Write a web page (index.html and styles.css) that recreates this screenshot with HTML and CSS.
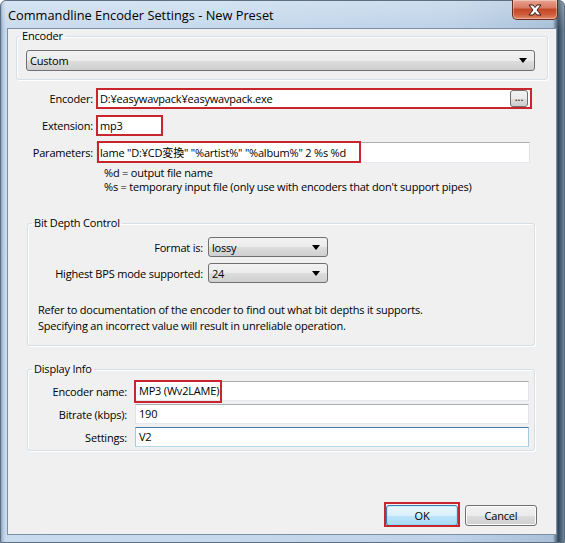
FILE: index.html
```html
<!DOCTYPE html>
<html>
<head>
<meta charset="utf-8">
<link rel="stylesheet" href="styles.css">
</head>
<body>
<div class="window">
  <div class="titlebar">
    <span class="title">Commandline Encoder Settings - New Preset</span>
    <span class="close">
      <svg width="16" height="12" viewBox="0 0 16 12"><path d="M2 1 L6 1 L8 3.5 L10 1 L14 1 L10 6 L14 11 L10 11 L8 8.5 L6 11 L2 11 L6 6 Z" fill="#fff" stroke="#3a1a14" stroke-width="1" stroke-linejoin="round"/></svg>
    </span>
  </div>
  <div class="client">
    <fieldset class="group g-encoder">
      <legend>Encoder</legend>
      <div class="select sel-wide"><span>Custom</span><svg class="arrow" width="8" height="5" viewBox="0 0 8 5"><path d="M0 0 H8 L4 5 Z" fill="#000"/></svg></div>
    </fieldset>

    <div class="form">
      <label>Encoder:</label>
      <div class="input hl in-enc"><span>D:¥easywavpack¥easywavpack.exe</span><span class="dots">...</span></div>
      <label>Extension:</label>
      <div class="input hl in-ext">mp3</div>
      <label>Parameters:</label>
      <div class="input in-par">lame "D:¥CD変換" "%artist%" "%album%" 2 %s %d<span class="mark mark-par"></span></div>
    </div>
    <div class="notes">
      <div>%d = output file name</div>
      <div>%s = temporary input file (only use with encoders that don't support pipes)</div>
    </div>

    <fieldset class="group g-bits">
      <legend>Bit Depth Control</legend>
      <div class="bits-grid">
        <label>Format is:</label>
        <div class="select sel-small"><span>lossy</span><svg class="arrow" width="8" height="5" viewBox="0 0 8 5"><path d="M0 0 H8 L4 5 Z" fill="#000"/></svg></div>
        <label>Highest BPS mode supported:</label>
        <div class="select sel-small"><span>24</span><svg class="arrow" width="8" height="5" viewBox="0 0 8 5"><path d="M0 0 H8 L4 5 Z" fill="#000"/></svg></div>
      </div>
      <p class="info">Refer to documentation of the encoder to find out what bit depths it supports.<br>Specifying an incorrect value will result in unreliable operation.</p>
    </fieldset>

    <fieldset class="group g-display">
      <legend>Display Info</legend>
      <div class="disp-grid">
        <label>Encoder name:</label>
        <div class="input in-disp">MP3 (Wv2LAME)<span class="mark mark-name"></span></div>
        <label>Bitrate (kbps):</label>
        <div class="input in-disp">190</div>
        <label>Settings:</label>
        <div class="input in-disp focus">V2</div>
      </div>
    </fieldset>

    <div class="buttons">
      <div class="btn default">OK<span class="mark mark-ok"></span></div>
      <div class="btn">Cancel</div>
    </div>
  </div>
</div>
</body>
</html>
```

FILE: styles.css
```css
* { box-sizing: border-box; }
html, body { margin: 0; padding: 0; }
body {
  width: 565px;
  height: 543px;
  overflow: hidden;
  background: #ffffff;
  font-family: "Open Sans", "Noto Sans CJK JP", sans-serif;
  font-size: 11px;
  letter-spacing: -0.2px;
  color: #000;
}
.window {
  width: 565px;
  height: 543px;
  border: 1px solid #5d6f82;
  border-radius: 6px 6px 0 0;
  background:
    linear-gradient(180deg, rgba(255,255,255,0.25) 0, rgba(255,255,255,0) 28px),
    linear-gradient(90deg, #8aa1b8 0, #b3c9e0 2px, #c9dbee 5px, #c6d9ed 40%, #bdd2e8 80%, #a9c0d8 98%, #33475b 99%, #6d8399 100%);
  padding: 0 7px 7px 6px;
  display: flex;
  flex-direction: column;
}
.titlebar {
  height: 27px;
  display: flex;
  align-items: flex-start;
  padding-left: 1px;
}
.title {
  font-size: 12.8px;
  letter-spacing: 0;
  line-height: 27px;
  color: #000;
  padding-top: 1px;
}
.close {
  margin-left: auto;
  margin-top: -1px;
  margin-right: -1px;
  width: 46px;
  height: 20px;
  border: 1px solid #6a2a1f;
  border-top: none;
  border-radius: 0 0 5px 5px;
  background: linear-gradient(180deg, #e8a392 0, #d97a63 40%, #c44729 50%, #cf5a38 75%, #e08a6a 100%);
  box-shadow: inset 0 0 0 1px rgba(255,255,255,0.35);
  display: flex;
  align-items: center;
  justify-content: center;
}
.client {
  width: 550px;
  height: 507px;
  background: #f0f0f0;
  border: 1px solid #7b8ea3;
  display: flex;
  flex-direction: column;
  align-items: flex-start;
}
.group {
  border: 1px solid #d5dfe5;
  border-radius: 3px;
  box-shadow: inset 1px 1px 0 #fff, 1px 1px 0 #fff;
  margin: 0;
  min-width: 0;
}
.group legend {
  padding: 0 2px;
  line-height: 14px;
  margin-left: -6px;
}
.g-encoder {
  margin-left: 8px;
  width: 532px;
  padding: 7px 12px 8px 9px;
}
.select {
  height: 21px;
  border: 1px solid #707070;
  border-radius: 3px;
  background: linear-gradient(180deg, #f2f2f2 0, #ebebeb 50%, #dddddd 51%, #cfcfcf 100%);
  display: flex;
  align-items: center;
  padding: 0 7px 0 3px;
  line-height: 19px;
}
.select .arrow { margin-left: auto; }
.sel-wide { width: 100%; }
.sel-small { width: 120px; height: 20px; }

.form {
  margin-top: 8px;
  display: grid;
  grid-template-columns: 85px auto;
  column-gap: 3px;
  row-gap: 6px;
  align-items: center;
  justify-items: start;
}
.form label, .bits-grid label, .disp-grid label { justify-self: end; white-space: nowrap; }
.input {
  position: relative;
  height: 21px;
  background: #fff;
  border: 1px solid;
  border-color: #abadb3 #e2e3ea #e3e9ef #e2e3ea;
  padding: 0 3px;
  line-height: 19px;
  white-space: nowrap;
  display: flex;
  align-items: center;
}
.input.hl {
  border: 2px solid #c8262c;
  padding: 0 2px;
  line-height: 17px;
}
.in-enc { width: 436px; }
.in-ext { width: 67px; }
.in-par { width: 434px; }
.dots {
  margin-left: auto;
  width: 18px;
  height: 17px;
  border: 1px solid #707070;
  border-radius: 3px;
  background: linear-gradient(180deg, #f2f2f2 0, #ebebeb 50%, #dddddd 51%, #cfcfcf 100%);
  font-size: 11px;
  letter-spacing: 0;
  line-height: 12px;
  text-align: center;
}
.mark {
  position: absolute;
  border: 2px solid #c8262c;
  pointer-events: none;
}
.mark-par { left: 0; top: -2px; width: 264px; height: 22px; }
.mark-name { left: -2px; top: -2px; width: 88px; height: 23px; }
.mark-ok { left: -3px; top: -4px; right: -3px; bottom: -2px; }

.notes {
  margin-top: 3px;
  padding-left: 96px;
  line-height: 14px;
}
.g-bits {
  margin-top: 22px;
  margin-left: 19px;
  width: 508px;
  padding: 7px 10px 11px 10px;
}
.bits-grid {
  display: grid;
  grid-template-columns: 165px 120px;
  column-gap: 5px;
  row-gap: 6px;
  align-items: center;
}
.info {
  margin: 19px 0 0 0;
  line-height: 16px;
}
.g-display {
  margin-top: 16px;
  margin-left: 19px;
  width: 508px;
  padding: 5px 5px 3px 10px;
}
.disp-grid {
  display: grid;
  grid-template-columns: 89px 394px;
  column-gap: 8px;
  row-gap: 3px;
  align-items: center;
}
.in-disp { width: 394px; height: 20px; line-height: 18px; }
.in-disp.focus { border-color: #3d7bad #a4c9e3 #b7d9ed #a4c9e3; }

.buttons {
  margin-top: 54px;
  align-self: stretch;
  display: flex;
  justify-content: flex-end;
  gap: 7px;
  padding-right: 19px;
}
.btn {
  position: relative;
  width: 72px;
  height: 21px;
  border: 1px solid #707070;
  border-radius: 3px;
  background: linear-gradient(180deg, #f2f2f2 0, #ebebeb 50%, #dddddd 51%, #cfcfcf 100%);
  box-shadow: inset 0 0 0 1px #fcfcfc;
  text-align: center;
  line-height: 19px;
}
.btn.default {
  border-color: #3c7fb1;
  background: linear-gradient(180deg, #eaf6fd 0, #d9f0fc 50%, #bee6fd 51%, #a7d9f5 100%);
  box-shadow: inset 0 0 0 1px #48d8fb44;
}
```
